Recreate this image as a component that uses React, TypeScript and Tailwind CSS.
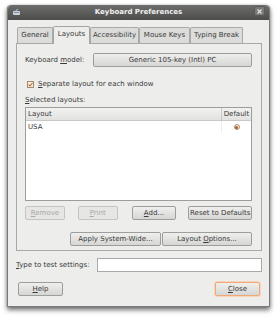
import { FC, ReactNode } from 'react'

const font = "font-['DejaVu_Sans','Liberation_Sans',sans-serif]"

interface BtnProps {
    children: ReactNode
    className?: string
    disabled?: boolean
    focused?: boolean
}

const Btn: FC<BtnProps> = ({ children, className, disabled, focused }) => (
    <div
        className={`flex items-center justify-center h-[14px] rounded-[2px] border text-[7px] leading-none ${
            disabled
                ? 'border-[#c4c4c2] bg-[#e6e6e4] text-[#a9a9a7]'
                : focused
                    ? 'border-[#f0a878] bg-gradient-to-b from-[#efefed] to-[#d6d6d4] text-[#3a3a3a] shadow-[0_0_0_1px_#f8d4bc]'
                    : 'border-[#9d9d9b] bg-gradient-to-b from-[#efefed] to-[#d6d6d4] text-[#3a3a3a]'
        } ${className ?? ''}`}
    >
        {children}
    </div>
)

const tabs = [
    { label: 'General', w: 'w-[36px]' },
    { label: 'Layouts', w: 'w-[37px]', active: true },
    { label: 'Accessibility', w: 'w-[49px]' },
    { label: 'Mouse Keys', w: 'w-[51px]' },
    { label: 'Typing Break', w: 'w-[53px]' },
]

const App: FC = () => {
    return (
        <div className={`w-[279px] h-[320px] bg-white pt-[5px] pl-[7px] ${font}`}>
            <div className="w-[263px] h-[302px] flex flex-col rounded-t-[4px] bg-[#ededeb] border border-[#7a7a78] border-t-0 shadow-[0_3px_5px_rgba(0,0,0,0.55),0_0_3px_rgba(0,0,0,0.2)]">
                {/* title bar */}
                <div className="relative h-[15px] flex items-center justify-center rounded-t-[4px] bg-gradient-to-b from-[#6e6e6c] to-[#4c4c4a]">
                    <svg className="absolute left-[5px] top-[4px]" width="7" height="6" viewBox="0 0 7 6">
                        <rect x="0" y="2" width="7" height="4" rx="1" fill="#c9d3dd" />
                        <rect x="1" y="3" width="5" height="1" fill="#7f8ea0" />
                        <path d="M3 2 C3 0 5 1 5 0" stroke="#d6dde5" strokeWidth="0.8" fill="none" />
                    </svg>
                    <span className="text-[7px] font-bold text-[#f0f0f0] leading-none">Keyboard Preferences</span>
                    <div className="absolute right-[4px] top-[1px] w-[11px] h-[10px] rounded-[2px] bg-[#7a7a78] border border-[#5a5a58] flex items-center justify-center">
                        <svg width="5" height="5" viewBox="0 0 5 5">
                            <path d="M0.5 0.5 L4.5 4.5 M4.5 0.5 L0.5 4.5" stroke="#e4e4e4" strokeWidth="1.2" />
                        </svg>
                    </div>
                </div>

                {/* body */}
                <div className="flex flex-col pl-[8px] pr-[7px] pt-[6px]">
                    {/* tabs */}
                    <div className="flex items-end h-[17px] pl-[1px]">
                        {tabs.map((t) =>
                            t.active ? (
                                <div
                                    key={t.label}
                                    className={`${t.w} h-[18px] -mb-[1px] relative z-10 flex items-center justify-center rounded-t-[2px] border border-b-0 border-[#a3a3a1] bg-[#ededeb] text-[7px] text-[#3a3a3a] leading-none pb-[2px]`}
                                >
                                    {t.label}
                                </div>
                            ) : (
                                <div
                                    key={t.label}
                                    className={`${t.w} h-[16px] flex items-center justify-center rounded-t-[2px] border border-b-0 border-[#a9a9a7] bg-[#dcdcda] text-[7px] text-[#3a3a3a] leading-none`}
                                >
                                    {t.label}
                                </div>
                            )
                        )}
                    </div>

                    {/* panel */}
                    <div className="h-[208px] border border-[#a9a9a7] bg-[#ededeb] flex flex-col pl-[8px] pr-[9px] pt-[9px]">
                        <div className="flex items-center h-[14px]">
                            <span className="w-[68px] text-[7px] text-[#3a3a3a] leading-none">
                                Keyboard <span className="underline">m</span>odel:
                            </span>
                            <Btn className="flex-1">Generic 105-key (Intl) PC</Btn>
                        </div>

                        <div className="flex items-center mt-[12px] pl-[2px] h-[10px]">
                            <div className="w-[7px] h-[7px] border border-[#a08a70] bg-[#f6f0e8] flex items-center justify-center">
                                <svg width="5" height="5" viewBox="0 0 5 5">
                                    <path d="M0.6 2.6 L2 4 L4.5 0.8" stroke="#c46a1c" strokeWidth="1.1" fill="none" />
                                </svg>
                            </div>
                            <span className="ml-[4px] text-[7px] text-[#3a3a3a] leading-none">
                                <span className="underline">S</span>eparate layout for each window
                            </span>
                        </div>

                        <div className="mt-[6px] h-[10px] flex items-center text-[7px] text-[#3a3a3a] leading-none">
                            <span>
                                <span className="underline">S</span>elected layouts:
                            </span>
                        </div>

                        {/* tree view */}
                        <div className="mt-[2px] h-[94px] border border-[#9d9d9b] bg-white flex flex-col">
                            <div className="flex h-[13px] border-b border-[#c8c8c6] bg-gradient-to-b from-[#f2f2f0] to-[#e2e2e0] text-[7px] text-[#3a3a3a] leading-none">
                                <div className="flex-1 flex items-center pl-[2px]">Layout</div>
                                <div className="w-[30px] flex items-center justify-center border-l border-[#c8c8c6]">Default</div>
                            </div>
                            <div className="flex h-[12px] text-[7px] text-[#3a3a3a] leading-none">
                                <div className="flex-1 flex items-center pl-[2px]">USA</div>
                                <div className="w-[30px] flex items-center justify-center border-l border-[#ececec]">
                                    <div className="w-[6px] h-[6px] rounded-full border border-[#a89478] bg-[#f4ece2] flex items-center justify-center">
                                        <div className="w-[3px] h-[3px] rounded-full bg-[#c4541c]" />
                                    </div>
                                </div>
                            </div>
                        </div>

                        <div className="flex mt-[5px]">
                            <Btn disabled className="w-[40px]">
                                <span><span className="underline">R</span>emove</span>
                            </Btn>
                            <Btn disabled className="w-[40px] ml-[13px]">
                                <span><span className="underline">P</span>rint</span>
                            </Btn>
                            <Btn className="w-[45px] ml-[14px]">
                                <span><span className="underline">A</span>dd...</span>
                            </Btn>
                            <Btn className="w-[64px] ml-[12px]">Reset to Defaults</Btn>
                        </div>

                        <div className="flex justify-end mt-[12px] gap-[1px]">
                            <Btn className="w-[91px]">Apply System-Wide...</Btn>
                            <Btn className="w-[90px]">
                                <span>Layout <span className="underline">O</span>ptions...</span>
                            </Btn>
                        </div>
                    </div>

                    {/* test input */}
                    <div className="flex items-center mt-[7px] h-[14px]">
                        <span className="w-[81px] text-[7px] text-[#3a3a3a] leading-none">
                            <span className="underline">T</span>ype to test settings:
                        </span>
                        <div className="flex-1 h-[14px] border border-[#a9a9a7] bg-white" />
                    </div>

                    <div className="flex justify-between mt-[10px] pl-[2px] pr-[2px]">
                        <Btn className="w-[45px]">
                            <span><span className="underline">H</span>elp</span>
                        </Btn>
                        <Btn focused className="w-[45px]">
                            <span><span className="underline">C</span>lose</span>
                        </Btn>
                    </div>
                </div>
            </div>
        </div>
    )
}

export default App
